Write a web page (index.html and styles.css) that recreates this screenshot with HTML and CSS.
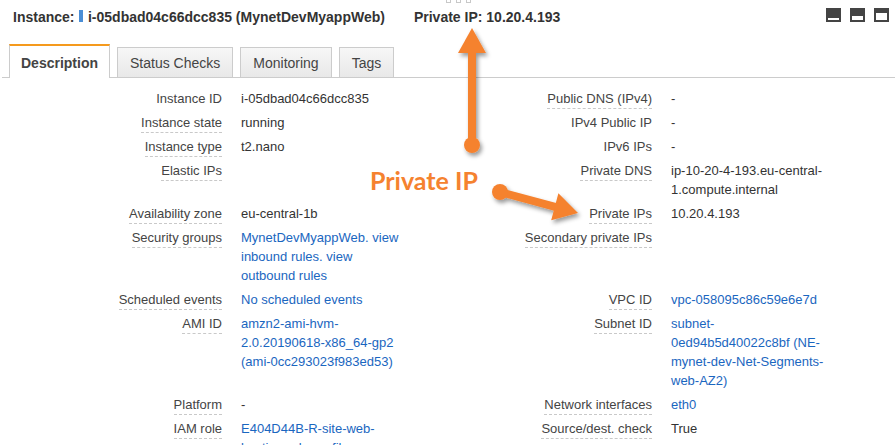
FILE: index.html
```html
<!DOCTYPE html>
<html lang="en">
<head>
<meta charset="utf-8">
<title>Instance description</title>
<link rel="stylesheet" href="styles.css">
</head>
<body>
<div class="page">
  <header class="topbar">
    <span class="title-label">Instance:</span>
    <span class="title-bar"></span>
    <span class="title-id">i-05dbad04c66dcc835 (MynetDevMyappWeb)</span>
    <span class="title-ip">Private IP: 10.20.4.193</span>
    <div class="layout-icons">
      <svg width="15" height="14" viewBox="0 0 15 14"><rect width="15" height="14" fill="#444"/><rect x="2" y="10" width="11" height="2" fill="#fff"/></svg>
      <svg width="15" height="14" viewBox="0 0 15 14"><rect width="15" height="14" fill="#444"/><rect x="2" y="8" width="11" height="4" fill="#fff"/></svg>
      <svg width="15" height="14" viewBox="0 0 15 14"><rect width="15" height="14" fill="#444"/><rect x="2" y="5" width="11" height="7" fill="#fff"/></svg>
    </div>
  </header>

  <nav class="tabs">
    <div class="tab active">Description</div>
    <div class="tab">Status Checks</div>
    <div class="tab">Monitoring</div>
    <div class="tab">Tags</div>
  </nav>

  <div class="details">
    <div class="k"><span class="lbl plain">Instance ID</span></div>
    <div class="v">i-05dbad04c66dcc835</div>
    <div class="k"><span class="lbl">Public DNS (IPv4)</span></div>
    <div class="v">-</div>

    <div class="k"><span class="lbl">Instance state</span></div>
    <div class="v">running</div>
    <div class="k"><span class="lbl plain">IPv4 Public IP</span></div>
    <div class="v">-</div>

    <div class="k"><span class="lbl">Instance type</span></div>
    <div class="v">t2.nano</div>
    <div class="k"><span class="lbl plain">IPv6 IPs</span></div>
    <div class="v">-</div>

    <div class="k"><span class="lbl">Elastic IPs</span></div>
    <div class="v"></div>
    <div class="k"><span class="lbl">Private DNS</span></div>
    <div class="v">ip-10-20-4-193.eu-central-<br>1.compute.internal</div>

    <div class="k"><span class="lbl">Availability zone</span></div>
    <div class="v">eu-central-1b</div>
    <div class="k"><span class="lbl">Private IPs</span></div>
    <div class="v">10.20.4.193</div>

    <div class="k"><span class="lbl">Security groups</span></div>
    <div class="v"><a class="link">MynetDevMyappWeb</a><span class="link">. </span><a class="link">view<br>inbound rules</a><span class="link">. </span><a class="link">view<br>outbound rules</a></div>
    <div class="k"><span class="lbl">Secondary private IPs</span></div>
    <div class="v"></div>

    <div class="k"><span class="lbl">Scheduled events</span></div>
    <div class="v"><a class="link">No scheduled events</a></div>
    <div class="k"><span class="lbl">VPC ID</span></div>
    <div class="v"><a class="link">vpc-058095c86c59e6e7d</a></div>

    <div class="k"><span class="lbl">AMI ID</span></div>
    <div class="v"><a class="link">amzn2-ami-hvm-<br>2.0.20190618-x86_64-gp2<br>(ami-0cc293023f983ed53)</a></div>
    <div class="k"><span class="lbl">Subnet ID</span></div>
    <div class="v"><a class="link">subnet-<br>0ed94b5d40022c8bf (NE-<br>mynet-dev-Net-Segments-<br>web-AZ2)</a></div>

    <div class="k"><span class="lbl">Platform</span></div>
    <div class="v">-</div>
    <div class="k"><span class="lbl">Network interfaces</span></div>
    <div class="v"><a class="link">eth0</a></div>

    <div class="k"><span class="lbl">IAM role</span></div>
    <div class="v"><a class="link">E404D44B-R-site-web-<br>bastion-role-profile</a></div>
    <div class="k"><span class="lbl">Source/dest. check</span></div>
    <div class="v">True</div>
  </div>

  <div class="annot-marks"><span></span><span></span><span></span></div>

  <svg class="annot-arrows" width="895" height="445" viewBox="0 0 895 445">
    <defs>
      <filter id="sh" x="-30%" y="-30%" width="160%" height="160%">
        <feDropShadow dx="2" dy="3" stdDeviation="2" flood-color="#000" flood-opacity="0.4"/>
      </filter>
    </defs>
    <g fill="#f5822f" filter="url(#sh)">
      <rect x="468" y="50" width="8" height="95"/>
      <circle cx="472" cy="145" r="8"/>
      <polygon points="472,28 458,53 486,53"/>
    </g>
    <g filter="url(#sh)">
      <line x1="500" y1="192" x2="557" y2="207.3" stroke="#f5822f" stroke-width="8"/>
      <circle cx="500" cy="192" r="8" fill="#f5822f"/>
      <polygon points="578,213 558.4,193.3 551.2,220.3" fill="#f5822f"/>
    </g>
  </svg>

  <div class="annot-label">Private IP</div>
</div>
</body>
</html>
```

FILE: styles.css
```css
html, body {
  margin: 0;
  padding: 0;
  background: #fff;
}

.page {
  position: relative;
  width: 895px;
  height: 445px;
  overflow: hidden;
  font-family: "Liberation Sans", Arial, Helvetica, sans-serif;
  color: #333;
}

/* header */
.topbar {
  display: flex;
  align-items: baseline;
  height: 20px;
  padding: 7px 6px 0 13px;
  font-size: 14px;
  font-weight: 700;
  line-height: 20px;
  color: #333;
}

.title-bar {
  display: inline-block;
  width: 4px;
  height: 12px;
  margin: 0 5px -2px 4.5px;
  background: #4a8ed6;
}

.title-ip {
  margin-left: 29px;
}

.layout-icons {
  display: flex;
  gap: 9px;
  margin-left: auto;
  margin-top: 1px;
  align-self: flex-start;
}

.layout-icons svg {
  display: block;
}

/* tabs */
.tabs {
  display: flex;
  align-items: flex-end;
  gap: 7px;
  margin: 17px 0 0 2px;
  padding-left: 7px;
  height: 33px;
  border-bottom: 1px solid #ccc;
}

.tab {
  padding: 7px 12px 6px;
  border: 1px solid #ccc;
  border-bottom: 0;
  background: linear-gradient(#f7f7f7, #e8e8e8);
  font-size: 14px;
  line-height: 16px;
  color: #444;
  white-space: nowrap;
}

.tab.active {
  position: relative;
  padding: 9px 11px 7px;
  margin-bottom: -1px;
  border-top: 2px solid #f59a1d;
  background: #fff;
  font-weight: 700;
  color: #444;
}

/* details grid */
.details {
  display: grid;
  grid-template-columns: 222px 185px 245px 1fr;
  padding-top: 11px;
  font-size: 13px;
  line-height: 19px;
}

.k {
  display: flex;
  justify-content: flex-end;
  align-items: flex-start;
  padding-bottom: 4px;
  color: #444;
}

.lbl {
  display: block;
  white-space: nowrap;
  border-bottom: 1px dashed #c9c9c9;
}

.lbl.plain {
  border-bottom-color: transparent;
}

.v {
  padding: 0 0 5px 19px;
  color: #333;
  white-space: nowrap;
}

.link {
  color: #1a66c0;
  text-decoration: none;
}

/* annotations */
.annot-marks {
  position: absolute;
  left: 446px;
  top: -2px;
  display: flex;
  gap: 5px;
}

.annot-marks span {
  width: 3px;
  height: 3px;
  border: 1px solid #c8c8c8;
}

.annot-arrows {
  position: absolute;
  left: 0;
  top: 0;
  pointer-events: none;
}

.annot-label {
  position: absolute;
  left: 370px;
  top: 168px;
  font-family: Lato, "Open Sans", sans-serif;
  font-weight: 700;
  font-size: 25px;
  line-height: 25px;
  color: #f5822f;
  white-space: nowrap;
}
```
